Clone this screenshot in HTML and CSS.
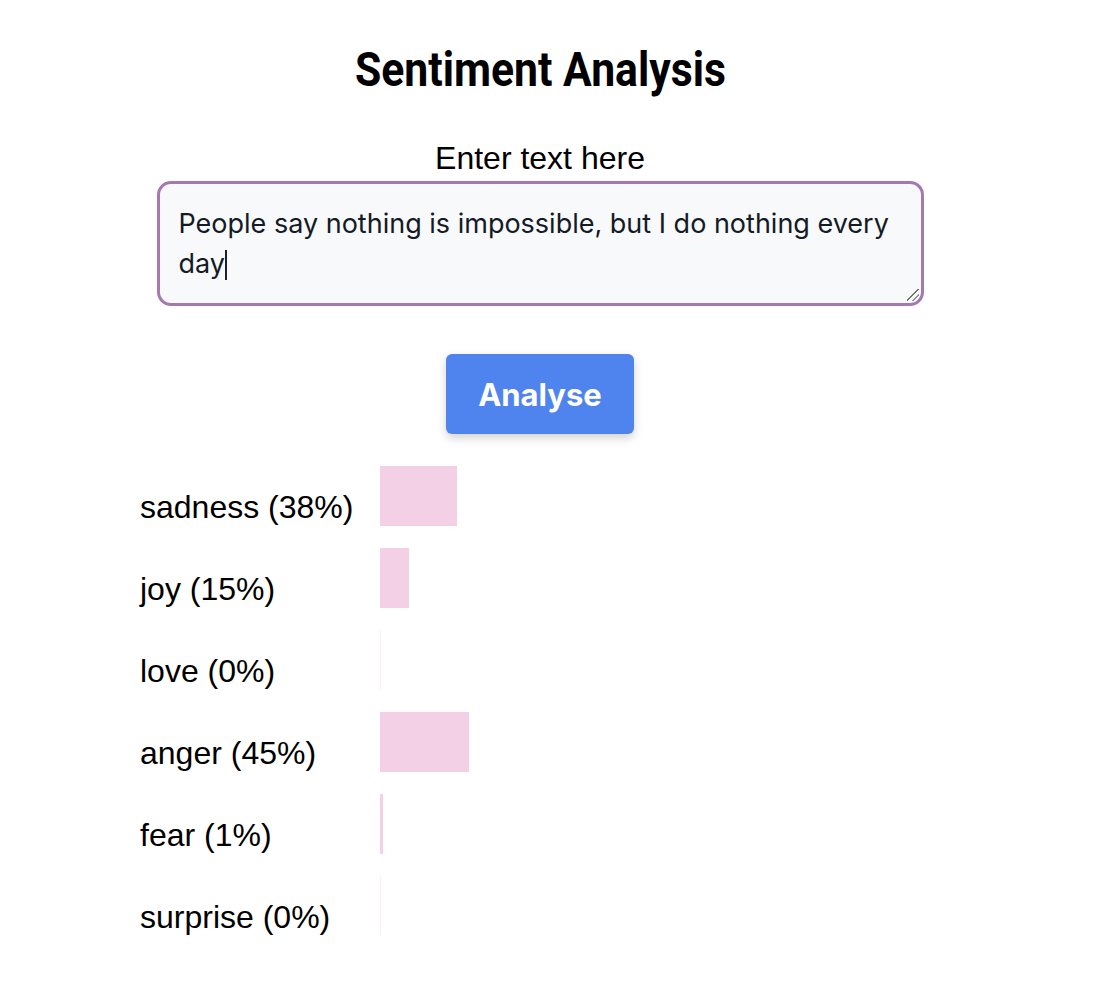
FILE: index.html
```html
<!DOCTYPE html>
<html>
<head>
<meta charset="utf-8">
<link rel="stylesheet" href="styles.css">
</head>
<body>
<main class="page">
  <h1 class="title"><span class="title-text">Sentiment Analysis</span></h1>
  <label class="field-label" for="txt">Enter text here</label>
  <div class="field-wrap">
    <div class="textarea" id="txt">People say nothing is impossible, but I do nothing every day<span class="caret"></span><span class="grip"></span></div>
  </div>
  <div class="btn-row"><button class="btn">Analyse</button></div>
  <section class="results">
    <div class="row"><span class="label">sadness (38%)</span><span class="bar" style="width:77px"></span></div>
    <div class="row"><span class="label">joy (15%)</span><span class="bar" style="width:29px"></span></div>
    <div class="row"><span class="label">love (0%)</span><span class="bar faint" style="width:1px"></span></div>
    <div class="row"><span class="label">anger (45%)</span><span class="bar" style="width:89px"></span></div>
    <div class="row"><span class="label">fear (1%)</span><span class="bar" style="width:3px"></span></div>
    <div class="row"><span class="label">surprise (0%)</span><span class="bar faint" style="width:1px"></span></div>
  </section>
</main>
</body>
</html>
```
FILE: styles.css
```css
html, body { margin: 0; padding: 0; background: #fff; }
.page {
  width: 1080px;
  font-family: "Liberation Sans", Arial, sans-serif;
  color: #000;
  display: flex;
  flex-direction: column;
  align-items: center;
}
.title {
  margin: 40px 0 0;
  font-family: Roboto, sans-serif;
  font-weight: 700;
  font-size: 48px;
  line-height: 60px;
  height: 60px;
}
.title-text { display: inline-block; transform: scaleX(0.89); }
.field-label {
  margin-top: 41px;
  font-size: 32px;
  line-height: 34px;
}
.field-wrap { margin-top: 6px; }
.textarea {
  position: relative;
  box-sizing: border-box;
  width: 767px;
  height: 125px;
  border: 3px solid #a678b0;
  border-radius: 14px;
  background: #f8f9fb;
  padding: 20px 22px 0 19px;
  font-family: Inter, sans-serif;
  font-size: 27px;
  line-height: 40px;
  color: #141a26;
  text-align: left;
}
.caret {
  display: inline-block;
  width: 2px;
  height: 30px;
  background: #1a202c;
  vertical-align: -7px;
}
.grip {
  position: absolute;
  right: 2px;
  bottom: 2px;
  width: 12px;
  height: 12px;
  background: linear-gradient(135deg, transparent 45%, #666 46%, #666 52%, transparent 53%, transparent 70%, #888 71%, #888 77%, transparent 78%);
}
.btn-row { margin-top: 48px; }
.btn {
  width: 188px;
  height: 80px;
  border: none;
  border-radius: 6px;
  background: #4f83ee;
  color: #fff;
  font-family: Inter, sans-serif;
  font-weight: 700;
  font-size: 31px;
  box-shadow: 0 4px 10px rgba(0,0,0,0.18);
}
.results {
  align-self: flex-start;
  margin: 32px 0 0 140px;
  display: flex;
  flex-direction: column;
  gap: 22px;
}
.row { display: flex; height: 60px; }
.label {
  width: 240px;
  font-size: 32px;
  line-height: 34px;
  padding-top: 24px;
}
.bar { height: 60px; background: #f4d0e7; }
.bar.faint { background: #fbecf5; }
```
